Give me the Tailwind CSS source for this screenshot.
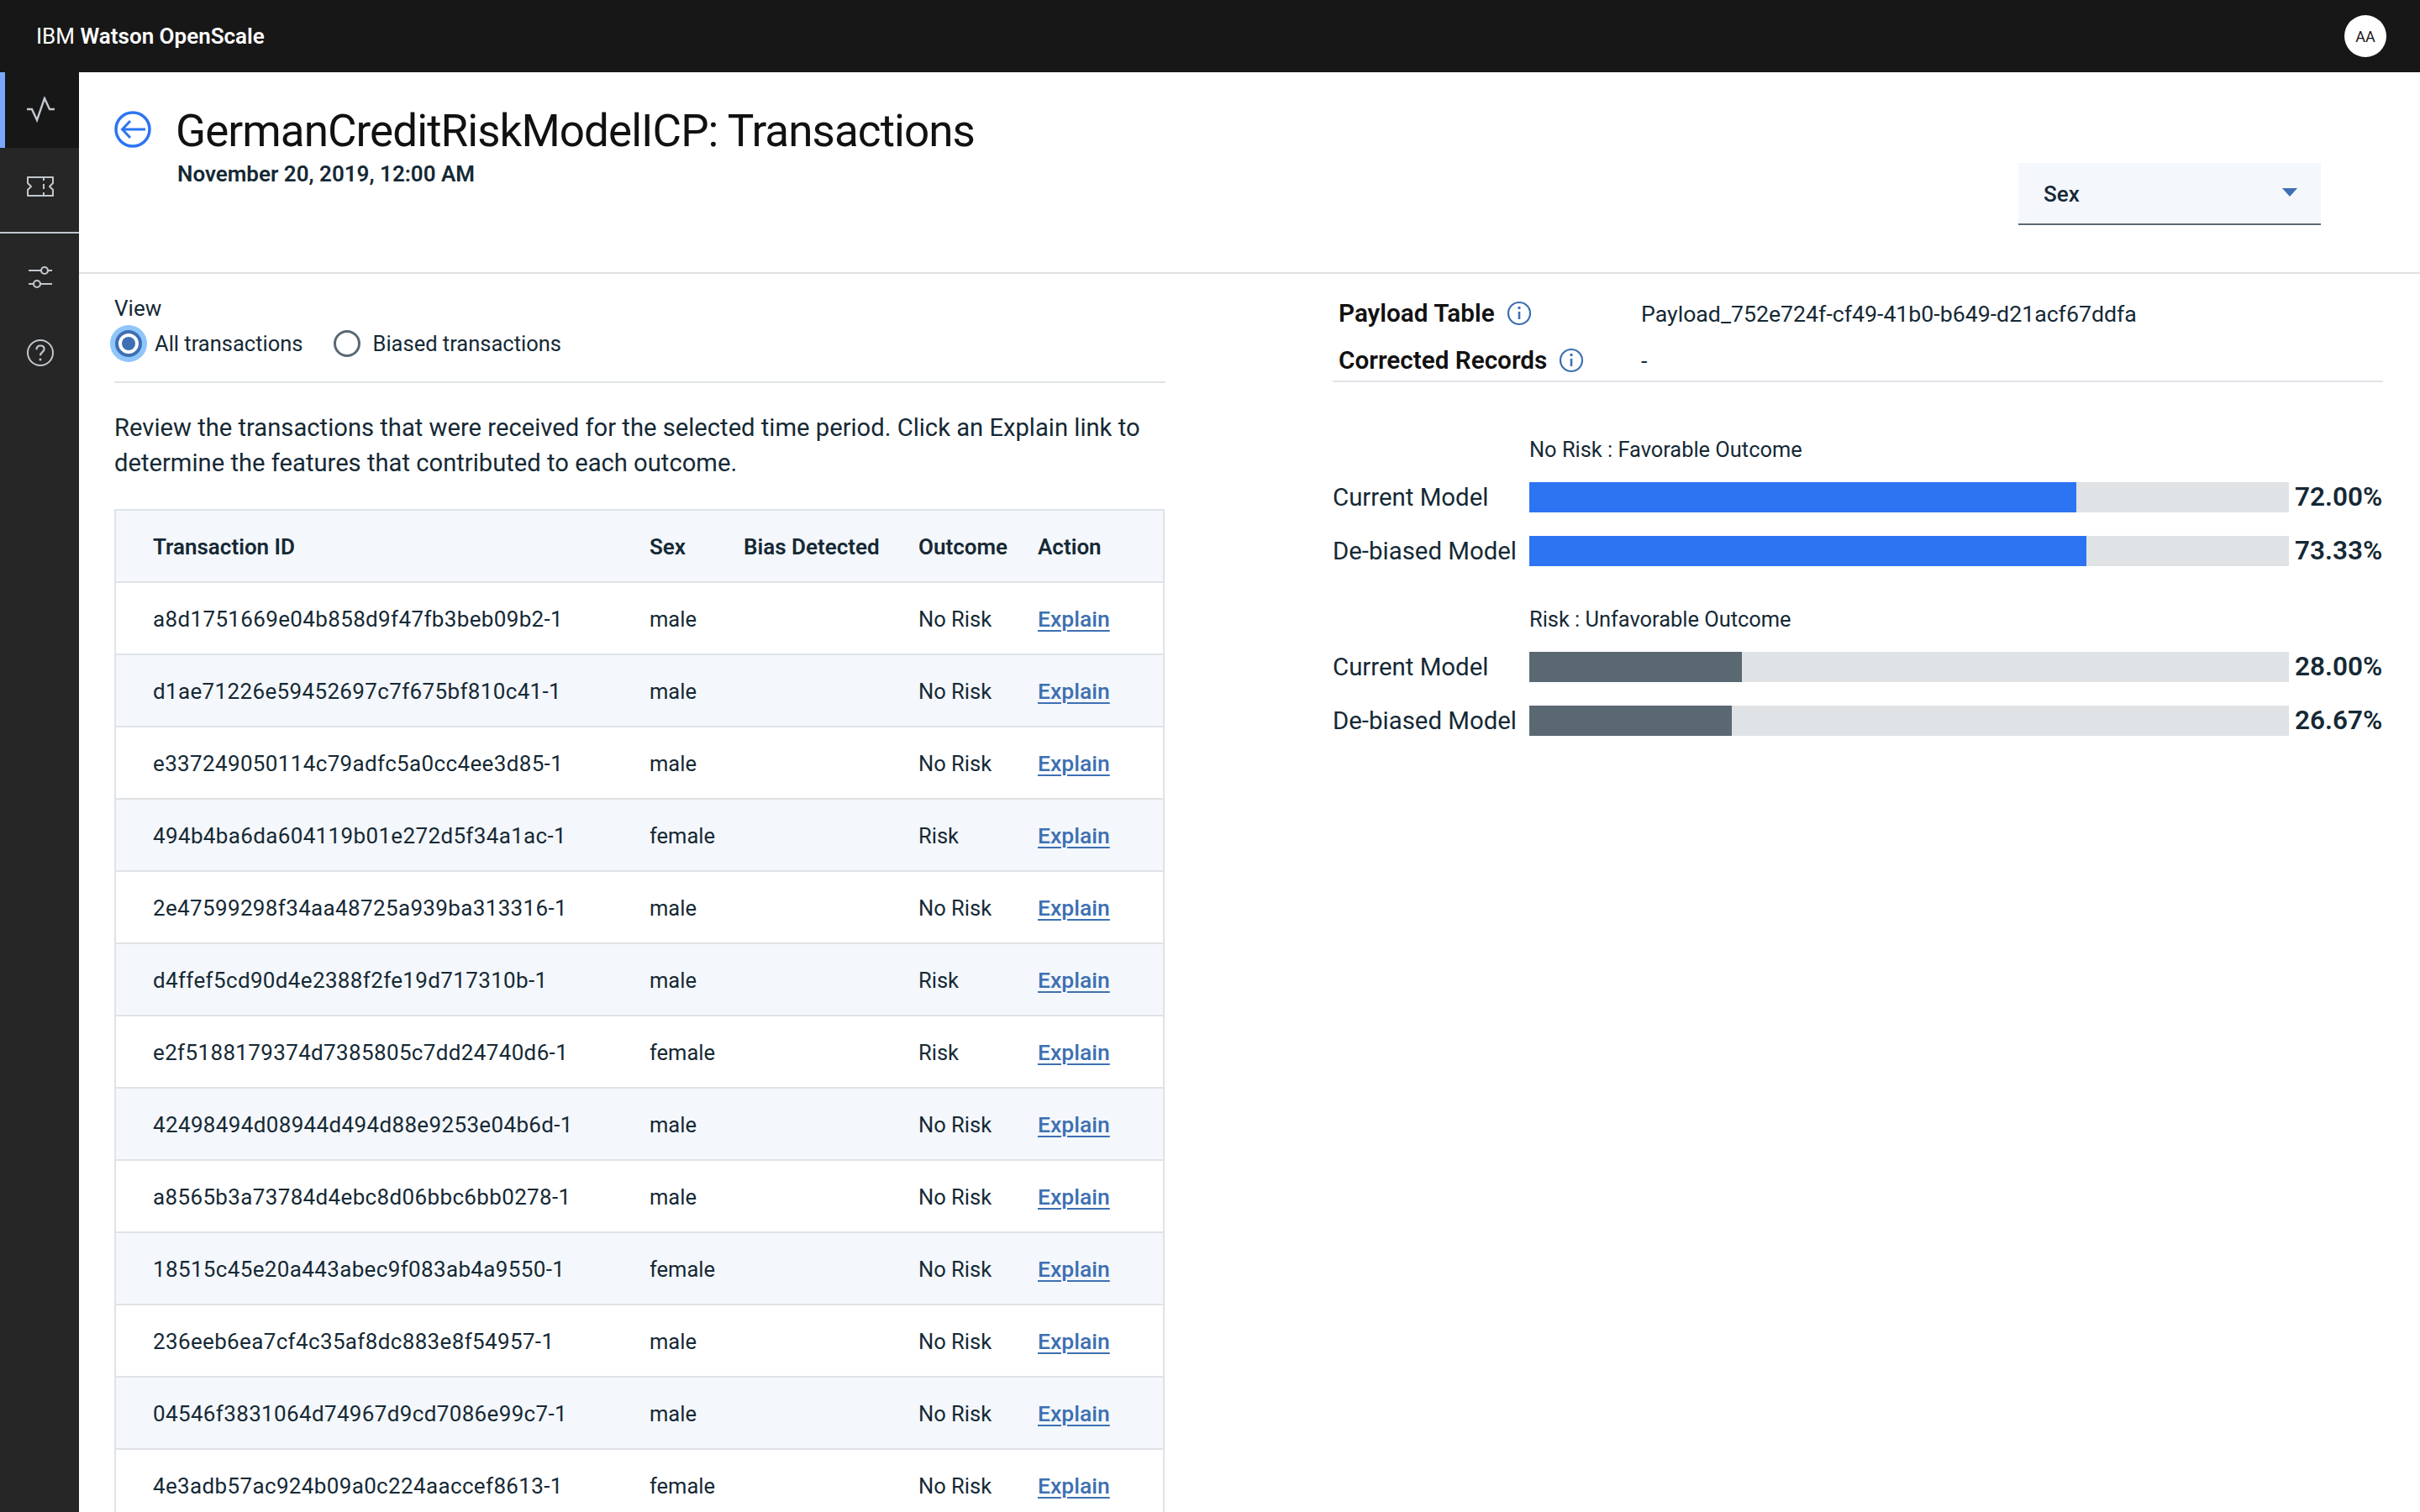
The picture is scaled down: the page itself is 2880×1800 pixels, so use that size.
<!doctype html>
<html lang="en">
<head>
<meta charset="utf-8">
<title>IBM Watson OpenScale</title>
<script src="https://cdn.jsdelivr.net/npm/@tailwindcss/browser@4"></script>
</head>
<body class="m-0 h-[1800px] w-[2880px] overflow-hidden bg-white font-['Roboto',sans-serif] text-[#152935]">
<header class="flex h-[86px] items-center justify-between bg-[#171717] pl-[43px] pr-[40px] text-white">
  <div class="mt-[-1px] text-[26px] leading-[32px] font-semibold"><span class="font-normal">IBM</span> Watson OpenScale</div>
  <div class="mt-[-1px] flex h-[50px] w-[50px] items-center justify-center rounded-full bg-white pt-[2px] text-[18px] text-[#171717]">AA</div>
</header>
<div class="flex h-[1714px]">
  <aside class="flex w-[94px] shrink-0 flex-col bg-[#262626]">
    <div class="flex h-[90px] items-center justify-center border-l-[6px] border-[#78a9ff] bg-[#171717] pr-[4px]">
      <svg width="36" height="32" viewBox="0 0 36 32" fill="none" stroke="#c1c7cd" stroke-width="2.4"><path d="M2 15h6l6 13 9-26 6 13h6"/></svg>
    </div>
    <div class="flex h-[102px] items-start justify-center border-b-2 border-[#c1c7cd] pl-[2px] pt-[33px]">
      <svg width="34" height="26" viewBox="0 0 34 26" fill="none" stroke="#c1c7cd" stroke-width="2"><path d="M2 2h30v7l-4 4 4 4v7H2v-7l4-4-4-4z" stroke-linejoin="round"/><path d="M21 2v4M21 10v6M21 20v4"/></svg>
    </div>
    <div class="flex h-[100px] items-center justify-center pl-[2px]">
      <svg width="32" height="30" viewBox="0 0 32 30" fill="none" stroke="#c1c7cd" stroke-width="2.2" class="mt-[4px]"><path d="M2 7h15M25 7h5M2 23h6M16 23h14"/><circle cx="21" cy="7" r="4"/><circle cx="12" cy="23" r="4"/></svg>
    </div>
    <div class="flex h-[84px] items-center justify-center pl-[2px]">
      <svg width="34" height="34" viewBox="0 0 34 34" fill="none" stroke="#c1c7cd" stroke-width="2"><circle cx="17" cy="17" r="15"/><path d="M12.5 13.2c0-3 2-4.700 4.600-4.700 2.700 0 4.500 1.700 4.500 4 0 3.800-4.600 3.500-4.600 7.800" stroke-width="2.200"/><circle cx="17" cy="25" r="1.500" fill="#c1c7cd" stroke="none"/></svg>
    </div>
  </aside>
  <main class="flex min-w-0 flex-1 flex-col">
    <section class="flex h-[240px] shrink-0 items-start justify-between border-b-2 border-[#dfe3e6] pl-[42px] pr-[118px]">
      <div class="flex items-start">
        <svg class="mt-[46px]" width="44" height="44" viewBox="0 0 44 44" fill="none" stroke="#2d74f3" stroke-width="3.500"><circle cx="22" cy="22" r="20"/><path d="M37 22H10M19 12 9.500 22 19 32" stroke-width="3"/></svg>
        <div class="ml-[29px] mt-[36px]">
          <h1 class="text-[53px] leading-[68px] font-normal tracking-[-0.95px] text-[#111]">GermanCreditRiskModelICP: Transactions</h1>
          <p class="ml-[2px] mt-[-1px] text-[26px] leading-[36px] font-semibold">November 20, 2019, 12:00 AM</p>
        </div>
      </div>
      <div class="mt-[108px] flex h-[74px] w-[360px] items-center justify-between border-b-2 border-[#5a6872] bg-[#f4f7fb] pl-[30px] pr-[28px] text-[26px] font-medium">
        <span class="pt-[2px]">Sex</span>
        <svg width="18" height="10" viewBox="0 0 18 10" class="mb-[2px]"><path d="M0 0h18L9 10z" fill="#3d70b2"/></svg>
      </div>
    </section>
    <div class="flex min-h-0 flex-1 justify-between overflow-hidden pl-[42px] pr-[44px]">
      <div class="w-[1251px] shrink-0 pt-[25px]">
        <div class="border-b-2 border-[#dfe3e6] pb-[24px]">
          <div class="text-[26px] leading-[32px]">View</div>
          <div class="mt-[5px] flex h-[42px] items-center text-[25.5px] leading-[32px]">
            <span class="ml-[-5px] flex h-[44px] w-[44px] items-center justify-center rounded-full bg-[#8ec5fb]">
              <span class="flex h-[32px] w-[32px] items-center justify-center rounded-full border-[4px] border-[#3d70b2] bg-white"><span class="h-[16px] w-[16px] rounded-full bg-[#3d70b2]"></span></span>
            </span>
            <span class="ml-[9px]">All transactions</span>
            <span class="ml-[36px] h-[32px] w-[32px] rounded-full border-[3px] border-[#5a6872]"></span>
            <span class="ml-[15px]">Biased transactions</span>
          </div>
        </div>
        <p class="mt-[32px] text-[29.2px] leading-[42px]">Review the transactions that were received for the selected time period. Click an Explain link to determine the features that contributed to each outcome.</p>
        <div class="mt-[34px] w-[1250px] border-x-2 border-t-2 border-[#dfe3e6]">
          <table class="w-full table-fixed border-separate border-spacing-0 text-left text-[25.5px] [&_td]:border-b-2 [&_td]:border-[#dfe3e6] [&_td]:pt-[2px] [&_th]:border-b-2 [&_th]:border-[#dfe3e6] [&_th]:pt-[2px] [&_th]:text-[26px] [&_th]:font-semibold">
            <colgroup><col class="w-[635px]"><col class="w-[112px]"><col class="w-[208px]"><col class="w-[142px]"><col></colgroup>
            <thead class="bg-[#f4f7fb]">
              <tr class="h-[86px]">
                <th class="pl-[44px]">Transaction ID</th>
                <th>Sex</th>
                <th>Bias Detected</th>
                <th>Outcome</th>
                <th>Action</th>
              </tr>
            </thead>
            <tbody>
              <tr class="h-[86px]"><td class="pl-[44px] text-[26px] tracking-[0.35px]">a8d1751669e04b858d9f47fb3beb09b2-1</td><td>male</td><td></td><td>No Risk</td><td class="text-[26.5px] font-medium text-[#3d70b2] underline decoration-2 underline-offset-4">Explain</td></tr>
              <tr class="h-[86px] bg-[#f4f7fb]"><td class="pl-[44px] text-[26px] tracking-[0.35px]">d1ae71226e59452697c7f675bf810c41-1</td><td>male</td><td></td><td>No Risk</td><td class="text-[26.5px] font-medium text-[#3d70b2] underline decoration-2 underline-offset-4">Explain</td></tr>
              <tr class="h-[86px]"><td class="pl-[44px] text-[26px] tracking-[0.35px]">e337249050114c79adfc5a0cc4ee3d85-1</td><td>male</td><td></td><td>No Risk</td><td class="text-[26.5px] font-medium text-[#3d70b2] underline decoration-2 underline-offset-4">Explain</td></tr>
              <tr class="h-[86px] bg-[#f4f7fb]"><td class="pl-[44px] text-[26px] tracking-[0.35px]">494b4ba6da604119b01e272d5f34a1ac-1</td><td>female</td><td></td><td>Risk</td><td class="text-[26.5px] font-medium text-[#3d70b2] underline decoration-2 underline-offset-4">Explain</td></tr>
              <tr class="h-[86px]"><td class="pl-[44px] text-[26px] tracking-[0.35px]">2e47599298f34aa48725a939ba313316-1</td><td>male</td><td></td><td>No Risk</td><td class="text-[26.5px] font-medium text-[#3d70b2] underline decoration-2 underline-offset-4">Explain</td></tr>
              <tr class="h-[86px] bg-[#f4f7fb]"><td class="pl-[44px] text-[26px] tracking-[0.35px]">d4ffef5cd90d4e2388f2fe19d717310b-1</td><td>male</td><td></td><td>Risk</td><td class="text-[26.5px] font-medium text-[#3d70b2] underline decoration-2 underline-offset-4">Explain</td></tr>
              <tr class="h-[86px]"><td class="pl-[44px] text-[26px] tracking-[0.35px]">e2f5188179374d7385805c7dd24740d6-1</td><td>female</td><td></td><td>Risk</td><td class="text-[26.5px] font-medium text-[#3d70b2] underline decoration-2 underline-offset-4">Explain</td></tr>
              <tr class="h-[86px] bg-[#f4f7fb]"><td class="pl-[44px] text-[26px] tracking-[0.35px]">42498494d08944d494d88e9253e04b6d-1</td><td>male</td><td></td><td>No Risk</td><td class="text-[26.5px] font-medium text-[#3d70b2] underline decoration-2 underline-offset-4">Explain</td></tr>
              <tr class="h-[86px]"><td class="pl-[44px] text-[26px] tracking-[0.35px]">a8565b3a73784d4ebc8d06bbc6bb0278-1</td><td>male</td><td></td><td>No Risk</td><td class="text-[26.5px] font-medium text-[#3d70b2] underline decoration-2 underline-offset-4">Explain</td></tr>
              <tr class="h-[86px] bg-[#f4f7fb]"><td class="pl-[44px] text-[26px] tracking-[0.35px]">18515c45e20a443abec9f083ab4a9550-1</td><td>female</td><td></td><td>No Risk</td><td class="text-[26.5px] font-medium text-[#3d70b2] underline decoration-2 underline-offset-4">Explain</td></tr>
              <tr class="h-[86px]"><td class="pl-[44px] text-[26px] tracking-[0.35px]">236eeb6ea7cf4c35af8dc883e8f54957-1</td><td>male</td><td></td><td>No Risk</td><td class="text-[26.5px] font-medium text-[#3d70b2] underline decoration-2 underline-offset-4">Explain</td></tr>
              <tr class="h-[86px] bg-[#f4f7fb]"><td class="pl-[44px] text-[26px] tracking-[0.35px]">04546f3831064d74967d9cd7086e99c7-1</td><td>male</td><td></td><td>No Risk</td><td class="text-[26.5px] font-medium text-[#3d70b2] underline decoration-2 underline-offset-4">Explain</td></tr>
              <tr class="h-[86px]"><td class="pl-[44px] text-[26px] tracking-[0.35px]">4e3adb57ac924b09a0c224aaccef8613-1</td><td>female</td><td></td><td>No Risk</td><td class="text-[26.5px] font-medium text-[#3d70b2] underline decoration-2 underline-offset-4">Explain</td></tr>
            </tbody>
          </table>
        </div>
      </div>
      <div class="w-[1250px] shrink-0">
        <div class="h-[129px] border-b-2 border-[#dfe3e6] pl-[7px] pt-[19px]">
          <div class="flex h-[56px] items-center">
            <span class="flex w-[360px] items-center text-[29.7px] font-semibold text-[#111]">Payload Table
              <svg class="ml-[14px]" width="30" height="30" viewBox="0 0 30 30" fill="none" stroke="#3d70b2" stroke-width="2.200"><circle cx="15" cy="15" r="13"/><path d="M15 13v9" stroke-width="2.600"/><circle cx="15" cy="8.500" r="1.700" fill="#3d70b2" stroke="none"/></svg>
            </span>
            <span class="pt-[2px] text-[26.7px]">Payload_752e724f-cf49-41b0-b649-d21acf67ddfa</span>
          </div>
          <div class="flex h-[56px] items-center">
            <span class="flex w-[360px] items-center text-[29.7px] font-semibold text-[#111]">Corrected Records
              <svg class="ml-[14px]" width="30" height="30" viewBox="0 0 30 30" fill="none" stroke="#3d70b2" stroke-width="2.200"><circle cx="15" cy="15" r="13"/><path d="M15 13v9" stroke-width="2.600"/><circle cx="15" cy="8.500" r="1.700" fill="#3d70b2" stroke="none"/></svg>
            </span>
            <span class="pt-[2px] text-[26.7px]">-</span>
          </div>
        </div>
        <div class="pl-[234px] pt-[64px] text-[25.4px] leading-[32px]">No Risk : Favorable Outcome</div>
        <div class="mt-[23px] flex h-[36px] items-center text-[29.4px]"><span class="w-[234px]">Current Model</span><span class="h-[36px] w-[904px] bg-[#dfe3e6]"><span class="block h-full bg-[#2d74f3]" style="width:72%"></span></span><span class="ml-[7px] text-[31.5px] font-semibold">72.00%</span></div>
        <div class="mt-[28px] flex h-[36px] items-center text-[29.4px]"><span class="w-[234px]">De-biased Model</span><span class="h-[36px] w-[904px] bg-[#dfe3e6]"><span class="block h-full bg-[#2d74f3]" style="width:73.33%"></span></span><span class="ml-[7px] text-[31.5px] font-semibold">73.33%</span></div>
        <div class="pl-[234px] pt-[47px] text-[25.4px] leading-[32px]">Risk : Unfavorable Outcome</div>
        <div class="mt-[23px] flex h-[36px] items-center text-[29.4px]"><span class="w-[234px]">Current Model</span><span class="h-[36px] w-[904px] bg-[#dfe3e6]"><span class="block h-full bg-[#5a6872]" style="width:28%"></span></span><span class="ml-[7px] text-[31.5px] font-semibold">28.00%</span></div>
        <div class="mt-[28px] flex h-[36px] items-center text-[29.4px]"><span class="w-[234px]">De-biased Model</span><span class="h-[36px] w-[904px] bg-[#dfe3e6]"><span class="block h-full bg-[#5a6872]" style="width:26.67%"></span></span><span class="ml-[7px] text-[31.5px] font-semibold">26.67%</span></div>
      </div>
    </div>
  </main>
</div>
</body>
</html>
